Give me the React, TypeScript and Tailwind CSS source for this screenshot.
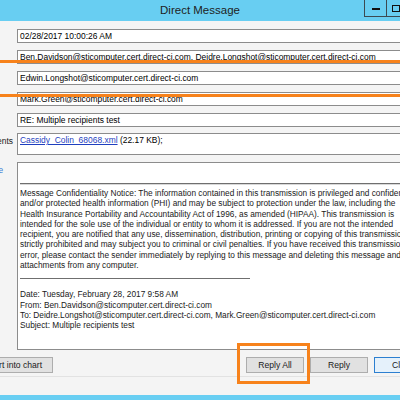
import React from 'react'

const font = { fontFamily: '"Liberation Sans", Arial, sans-serif' }

function Field({ children }: { children?: React.ReactNode }) {
  return (
    <div className="ml-[17px] h-[14px] w-[420px] shrink-0 border border-[#8c8c8c] bg-white px-[2px] text-[8.45px] leading-[12px] text-black whitespace-nowrap overflow-hidden">
      {children}
    </div>
  )
}

const notice = [
  'Message Confidentiality Notice: The information contained in this transmission is privileged and confidential',
  'and/or protected health information (PHI) and may be subject to protection under the law, including the',
  'Health Insurance Portability and Accountability Act of 1996, as amended (HIPAA). This transmission is',
  'intended for the sole use of the individual or entity to whom it is addressed. If you are not the intended',
  'recipient, you are notified that any use, dissemination, distribution, printing or copying of this transmission is',
  'strictly prohibited and may subject you to criminal or civil penalties. If you have received this transmission in',
  'error, please contact the sender immediately by replying to this message and deleting this message and any',
  'attachments from any computer.',
]

const quoted = [
  'Date: Tuesday, February 28, 2017 9:58 AM',
  'From: Ben.Davidson@sticomputer.cert.direct-ci.com',
  'To: Deidre.Longshot@sticomputer.cert.direct-ci.com, Mark.Green@sticomputer.cert.direct-ci.com',
  'Subject: Multiple recipients test',
]

export default function App() {
  return (
    <div className="relative w-[400px] h-[400px] overflow-hidden bg-[#f4f4f4]" style={font}>
      {/* title bar */}
      <div className="relative h-[21px] bg-[#68cef2] flex items-center justify-center">
        <span className="text-[11.5px] text-[#1e1e1e] mt-[1px]">Direct Message</span>
        <div className="absolute left-[364px] top-0 flex h-[17px]">
          <div className="w-[23px] h-full border-x border-b border-[#3c4a52] flex items-center justify-center">
            <div className="w-[8px] h-[2px] bg-[#111] mt-[2px]" />
          </div>
          <div className="w-[23px] h-full border-r border-b border-[#3c4a52] flex items-start pl-[5px] pt-[5px]">
            <div className="w-[8px] h-[7px] border border-[#111]" />
          </div>
        </div>
      </div>

      <div className="w-[440px]">
        {/* header fields */}
        <div className="flex flex-col gap-[7px] pt-[8px]">
          <Field>02/28/2017 10:00:26 AM</Field>
          <Field>Ben.Davidson@sticomputer.cert.direct-ci.com, Deidre.Longshot@sticomputer.cert.direct-ci.com</Field>
          <Field>Edwin.Longshot@sticomputer.cert.direct-ci.com</Field>
          <Field>Mark.Green@sticomputer.cert.direct-ci.com</Field>
          <Field>RE: Multiple recipients test</Field>
        </div>

        {/* attachments */}
        <div className="flex mt-[6px] text-[8.45px]">
          <div className="w-[17px] shrink-0 overflow-hidden flex justify-end pr-[4px] pt-[2px] leading-[12px] text-[#1a1a1a]">
            <span className="whitespace-nowrap">Attachments</span>
          </div>
          <div className="h-[22px] w-[420px] shrink-0 border border-[#8c8c8c] bg-white px-[2px] leading-[12px] whitespace-nowrap">
            <span className="text-[#1f3fbf] underline">Cassidy_Colin_68068.xml</span>
            <span className="text-black"> (22.17 KB);</span>
          </div>
        </div>

        {/* body */}
        <div className="flex mt-[7px] text-[8.3px]">
          <div className="w-[17px] shrink-0 overflow-hidden flex justify-end pr-[14px] pt-[2px] leading-[12px] text-[#3a7bd5]">
            <span className="whitespace-nowrap">Message</span>
          </div>
          <div className="h-[188px] w-[420px] shrink-0 border border-[#8c8c8c] bg-white">
            <div className="h-[20px]" />
            <div className="mx-[2px] border-t border-[#6f6f6f] border-b border-b-[#d8d8d8]" />
            <div className="px-[2px] pt-[3px] leading-[10.3px] text-[#1a1a1a] whitespace-nowrap">
              {notice.map((l) => (
                <div key={l}>{l}</div>
              ))}
            </div>
            <div className="mx-[2px] mt-[8px] w-[230px] border-t border-[#6f6f6f]" />
            <div className="px-[2px] pt-[10px] leading-[10.3px] text-[#1a1a1a] whitespace-nowrap">
              {quoted.map((l) => (
                <div key={l}>{l}</div>
              ))}
            </div>
          </div>
        </div>

        {/* buttons */}
        <div className="flex mt-[7px] text-[8.6px] text-[#1a1a1a]">
          <button className="ml-[-28px] w-[81px] h-[16px] shrink-0 bg-[#e1e1e1] border border-[#adadad] flex items-center justify-center whitespace-nowrap">
            Insert into chart
          </button>
          <div className="flex shrink-0 gap-[6px] ml-[193px]">
            <button className="w-[58px] h-[16px] bg-[#e1e1e1] border border-[#adadad] flex items-center justify-center">Reply All</button>
            <button className="w-[58px] h-[16px] bg-[#e1e1e1] border border-[#adadad] flex items-center justify-center">Reply</button>
            <button className="w-[58px] h-[16px] bg-[#e5f1fb] border border-[#2c7fd0] flex items-center justify-center">Close</button>
          </div>
        </div>
        <div className="mt-[3px] border-t border-[#e2e2e2]" />
      </div>

      {/* bottom border */}
      <div className="absolute left-0 bottom-0 w-full h-[5px] bg-[#68cef2]" />

      {/* highlight overlays */}
      <div className="absolute left-[-10px] top-[60px] w-[420px] h-[37px] border-y-[3px] border-[#f7821b]" />
      <div className="absolute left-[237px] top-[343px] w-[73px] h-[41px] border-[3px] border-[#f7821b]" />
    </div>
  )
}
